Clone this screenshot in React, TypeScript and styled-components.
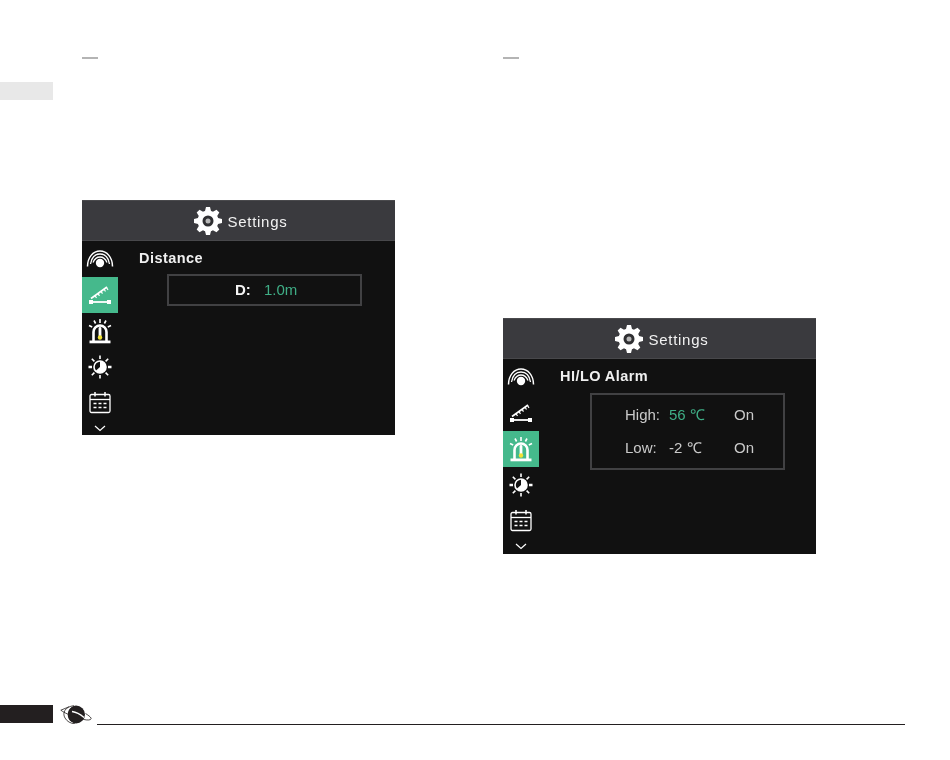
import styled, { createGlobalStyle } from 'styled-components';

const GlobalStyle = createGlobalStyle`
  html, body {
    margin: 0;
    padding: 0;
    background: #fff;
  }
`;

const Page = styled.div`
  width: 950px;
  height: 760px;
  overflow: hidden;
  background: #fff;
`;

const Main = styled.div`
  display: flex;
  height: 705px;
`;

const Rail = styled.div`
  width: 53px;
  padding-top: 82px;
  margin-right: 29px;
`;

const GreyTab = styled.div`
  height: 18px;
  background: #e8e8e8;
`;

const Column = styled.div<{ $gap: number; $left?: number }>`
  width: 313px;
  padding-top: 57px;
  margin-left: ${(p) => p.$left ?? 0}px;

  & > div:last-child {
    margin-top: ${(p) => p.$gap}px;
  }
`;

const Dash = styled.div`
  width: 16px;
  height: 2px;
  background: #b4b4b4;
`;

const Screen = styled.div<{ $height: number }>`
  width: 313px;
  height: ${(p) => p.$height}px;
  background: #111111;
  display: flex;
  flex-direction: column;
  font-family: 'Liberation Sans', Arial, sans-serif;
  filter: blur(0.4px);
`;

const Header = styled.div`
  height: 41px;
  flex: none;
  box-sizing: border-box;
  background: #3a3a3e;
  border-top: 1px solid #4a4a4d;
  border-bottom: 1px solid #48484b;
  display: flex;
  align-items: center;
  justify-content: center;
  gap: 5px;
  padding-left: 3px;
`;

const HeaderTitle = styled.span`
  color: #f2f2f2;
  font-size: 15px;
  letter-spacing: 0.7px;
  margin-top: 1px;
`;

const Body = styled.div`
  flex: 1;
  display: flex;
  min-height: 0;
`;

const Sidebar = styled.div`
  width: 36px;
  flex: none;
  display: flex;
  flex-direction: column;
`;

const SideItem = styled.div<{ $active?: boolean }>`
  height: 36px;
  flex: none;
  display: flex;
  align-items: center;
  justify-content: center;
  background: ${(p) => (p.$active ? '#45b98c' : 'transparent')};
`;

const More = styled.div`
  flex: 1;
  display: flex;
  align-items: center;
  justify-content: center;
`;

const Content = styled.div`
  flex: 1;
  padding: 9px 0 0 21px;
`;

const PanelTitle = styled.div`
  color: #f0f0f0;
  font-size: 14.5px;
  line-height: 16px;
  font-weight: 700;
  letter-spacing: 0.45px;
`;

const ValueBox = styled.div<{ $left: number; $height: number }>`
  box-sizing: border-box;
  width: 195px;
  height: ${(p) => p.$height}px;
  margin: ${(p) => (p.$height > 40 ? 9 : 8)}px 0 0 ${(p) => p.$left}px;
  border: 2px solid #414143;
`;

const DistanceRow = styled.div`
  height: 100%;
  display: flex;
  align-items: center;
  padding-left: 66px;
  padding-bottom: 2px;
  box-sizing: border-box;
  font-size: 15px;
`;

const BoldLabel = styled.span`
  color: #f4f4f4;
  font-weight: 700;
  width: 29px;
`;

const AlarmGrid = styled.div`
  display: grid;
  grid-template-columns: 44px 65px auto;
  grid-auto-rows: 33px;
  padding: 3px 0 0 33px;
  align-items: center;
  font-size: 15px;
  color: #cacaca;
`;

const Value = styled.span<{ $accent?: boolean }>`
  color: ${(p) => (p.$accent ? '#3fae86' : '#cacaca')};
  font-size: 15px;
  line-height: 17px;
`;

const Footer = styled.div`
  height: 20px;
  display: flex;
  align-items: flex-start;
`;

const BlackTab = styled.div`
  width: 53px;
  height: 18px;
  background: #231f20;
`;

const Logo = styled.svg`
  width: 36px;
  height: 19px;
  margin: 0 1px 0 7px;
  flex: none;
`;

const Rule = styled.div`
  width: 808px;
  height: 1px;
  margin-top: 19px;
  background: #231f20;
`;

function Gear() {
  const teeth = [0, 45, 90, 135, 180, 225, 270, 315];
  return (
    <svg width="30" height="30" viewBox="0 0 30 30">
      <circle cx="15" cy="15" r="10.500" fill="#fff" />
      {teeth.map((a) => (
        <path key={a} d="M13 1h4l1.500 6h-7z" fill="#fff" transform={`rotate(${a} 15 15)`} />
      ))}
      <circle cx="15" cy="15" r="5.500" fill="#2f2f32" />
      <circle cx="15" cy="15" r="2.500" fill="#b8b8b8" />
    </svg>
  );
}

function SignalIcon() {
  return (
    <svg width="28" height="20" viewBox="0 0 28 20" fill="none" stroke="#fff" strokeWidth="1.300">
      <path d="M1.500 17.500C1.500 8.500 7 2 14 2s12.500 6.500 12.500 15.500" strokeWidth="1.500" />
      <path d="M4.500 15C5.500 9 9 5 14 5s8.500 4 9.500 10" />
      <path d="M7 13.500C8.500 10 11 8 14 8s5.500 2 7 5.500" />
      <circle cx="14" cy="14" r="4.200" fill="#fff" stroke="none" />
    </svg>
  );
}

function RulerIcon() {
  return (
    <svg width="24" height="20" viewBox="0 0 24 20" fill="none" stroke="#fff">
      <path d="M3 13.500L19 2" strokeWidth="1.700" />
      <path d="M7 10.700l1.500 2.300M10 8.600l1.500 2.300M13 6.400l1.500 2.300M16 4.200l1.500 2.300M18.500 2.500l1.500 2.300" strokeWidth="1.200" />
      <path d="M3 17h18" strokeWidth="1.800" />
      <rect x="1" y="15" width="4" height="4" fill="#fff" stroke="none" />
      <rect x="19" y="15" width="4" height="4" fill="#fff" stroke="none" />
    </svg>
  );
}

function AlarmIcon() {
  return (
    <svg width="24" height="25" viewBox="0 0 24 25" fill="none" stroke="#fff">
      <path d="M12 0v4M6 1.500l1.600 3M18 1.500l-1.600 3M1 6.500l3.200 1.500M23 6.500l-3.200 1.500" strokeWidth="1.600" />
      <path d="M5.500 22V13a6.500 6.500 0 0 1 13 0v9" strokeWidth="2.600" />
      <path d="M1.500 21.500h21v2.800h-21z" fill="#fff" stroke="none" />
      <path d="M12 9.500v8" stroke="#fff" strokeWidth="2.800" strokeLinecap="round" />
      <circle cx="12" cy="18.500" r="2.200" fill="#f1e234" stroke="none" />
    </svg>
  );
}

function BrightnessIcon() {
  return (
    <svg width="24" height="24" viewBox="0 0 24 24" fill="none" stroke="#fff" strokeWidth="1.600">
      <circle cx="12" cy="12" r="6" />
      <path d="M12 12V6a6 6 0 0 1 0 12 6 6 0 0 1-4.500-2z" fill="#fff" stroke="none" />
      <path d="M12 .5v3.500M12 20v3.500" />
      <path d="M.5 12H4M20 12h3.500" strokeWidth="2.400" />
      <path d="M3.800 3.800l2.600 2.600M17.600 17.600l2.600 2.600M20.200 3.800l-2.600 2.600M6.400 17.600l-2.600 2.600" />
    </svg>
  );
}

function CalendarIcon() {
  return (
    <svg width="22" height="22" viewBox="0 0 22 22" fill="none" stroke="#fff" strokeWidth="1.300">
      <rect x="1" y="2.500" width="20" height="18" rx="1.500" />
      <path d="M1 7.500h20" />
      <path d="M6 0v4.500M16 0v4.500" strokeWidth="1.500" />
      <path d="M4.500 11.500h3M9.500 11.500h3M14.500 11.500h3M4.500 15.500h3M9.500 15.500h3M14.500 15.500h3" strokeWidth="1.500" />
    </svg>
  );
}

function Chevron() {
  return (
    <svg width="12" height="7" viewBox="0 0 12 7" fill="none" stroke="#fff" strokeWidth="1.200">
      <path d="M1 1l5 4.500L11 1" />
    </svg>
  );
}

function PlanetLogo() {
  return (
    <Logo viewBox="0 0 36 19">
      <circle cx="16" cy="9.500" r="9" fill="#231f20" />
      <path d="M14 .8C6.500 3 5 15 14 18.400 6 18.500 2 13 3 8 4 4 8 1 14 .8z" fill="#fff" />
      <path d="M14 .7C5 1.500 2 8 5 13c2 3.500 5.500 5.500 10 5.800" fill="none" stroke="#231f20" strokeWidth="0.800" />
      <path d="M9 1.800L.8 5.200C6 9 14 12 24 14.500c4 1 8 .5 7-1.500-.6-1.200-3-3-5.500-4.500" fill="none" stroke="#231f20" strokeWidth="0.800" />
      <path d="M12 6.500c4 .5 8 2.500 12 6" fill="none" stroke="#fff" strokeWidth="1.300" />
    </Logo>
  );
}

function SideMenu({ active }: { active: number }) {
  const icons = [<SignalIcon />, <RulerIcon />, <AlarmIcon />, <BrightnessIcon />, <CalendarIcon />];
  return (
    <Sidebar>
      {icons.map((icon, i) => (
        <SideItem key={i} $active={i === active}>
          {icon}
        </SideItem>
      ))}
      <More>
        <Chevron />
      </More>
    </Sidebar>
  );
}

function SettingsHeader() {
  return (
    <Header>
      <Gear />
      <HeaderTitle>Settings</HeaderTitle>
    </Header>
  );
}

function App() {
  return (
    <Page>
      <GlobalStyle />
      <Main>
        <Rail>
          <GreyTab />
        </Rail>
        <Column $gap={141}>
          <Dash />
          <Screen $height={235}>
            <SettingsHeader />
            <Body>
              <SideMenu active={1} />
              <Content>
                <PanelTitle>Distance</PanelTitle>
                <ValueBox $left={28} $height={32}>
                  <DistanceRow>
                    <BoldLabel>D:</BoldLabel>
                    <Value $accent>1.0m</Value>
                  </DistanceRow>
                </ValueBox>
              </Content>
            </Body>
          </Screen>
        </Column>
        <Column $gap={259} $left={108}>
          <Dash />
          <Screen $height={236}>
            <SettingsHeader />
            <Body>
              <SideMenu active={2} />
              <Content>
                <PanelTitle>HI/LO Alarm</PanelTitle>
                <ValueBox $left={30} $height={77}>
                  <AlarmGrid>
                    <span>High:</span>
                    <Value $accent>56 ℃</Value>
                    <span>On</span>
                    <span>Low:</span>
                    <Value>-2 ℃</Value>
                    <span>On</span>
                  </AlarmGrid>
                </ValueBox>
              </Content>
            </Body>
          </Screen>
        </Column>
      </Main>
      <Footer>
        <BlackTab />
        <PlanetLogo />
        <Rule />
      </Footer>
    </Page>
  );
}

export default App;
